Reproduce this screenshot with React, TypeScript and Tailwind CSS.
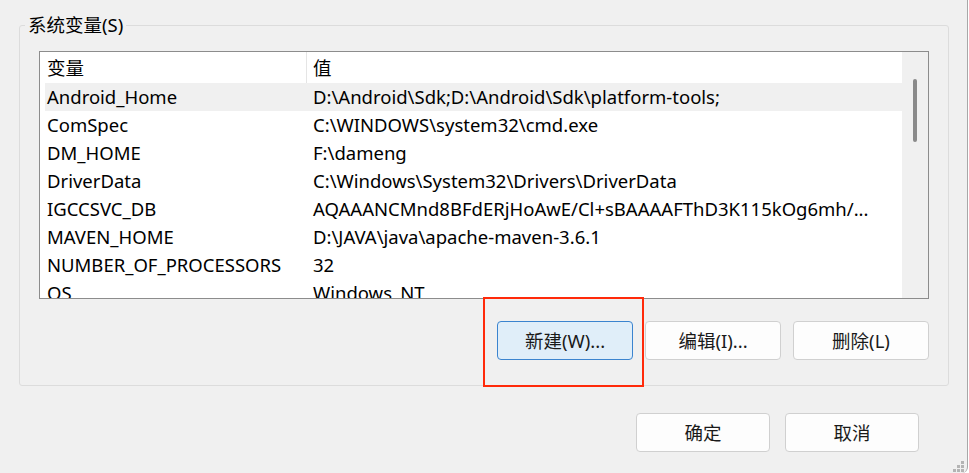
const rows: [string, string][] = [
  ["Android_Home", "D:\\Android\\Sdk;D:\\Android\\Sdk\\platform-tools;"],
  ["ComSpec", "C:\\WINDOWS\\system32\\cmd.exe"],
  ["DM_HOME", "F:\\dameng"],
  ["DriverData", "C:\\Windows\\System32\\Drivers\\DriverData"],
  ["IGCCSVC_DB", "AQAAANCMnd8BFdERjHoAwE/Cl+sBAAAAFThD3K115kOg6mh/..."],
  ["MAVEN_HOME", "D:\\JAVA\\java\\apache-maven-3.6.1"],
  ["NUMBER_OF_PROCESSORS", "32"],
  ["OS", "Windows_NT"],
];

function Btn({ label, primary, w = "w-[136px]" }: { label: string; primary?: boolean; w?: string }) {
  return (
    <button
      className={`flex h-[39px] ${w} items-center justify-center rounded-[4px] border text-[18.5px] text-[#1a1a1a] ${
        primary ? "border-[#3b84cf] bg-[#e0eef9]" : "border-[#d0d0d0] bg-[#fdfdfd]"
      }`}
    >
      {label}
    </button>
  );
}

export default function App() {
  return (
    <div
      className="relative h-[473px] w-[968px] overflow-hidden rounded-br-[6px] border-r border-[#a8a8a8] bg-[#f0f0f0] text-[18.5px] text-black"
      style={{ fontFamily: '"Noto Sans", "Noto Sans CJK SC", sans-serif' }}
    >
      <fieldset className="ml-[19px] mt-[13px] h-[373px] w-[930px] rounded-[3px] border border-[#dcdcdc] px-[19px]">
        <legend className="-ml-[14px] px-[3px] leading-[24px]">系统变量(S)</legend>

        {/* list view */}
        <div className="mt-[14px] flex h-[248px] w-[890px] overflow-hidden border border-[#8c8c8c] bg-white">
          <div className="flex-1 overflow-hidden pl-[5px]">
            <div className="flex h-[31px] items-center">
              <div className="w-[261px] pl-[2px]">变量</div>
              <div className="h-full w-px bg-[#e5e5e5]" />
              <div className="pl-[6px]">值</div>
            </div>
            {rows.map(([k, v], i) => (
              <div
                key={k}
                className={`flex h-[28px] items-center whitespace-nowrap ${i === 0 ? "bg-[#f0f0f0]" : ""}`}
              >
                <div className="w-[262px] pl-[2px]">{k}</div>
                <div className="pl-[6px]">{v}</div>
              </div>
            ))}
          </div>
          <div className="w-[26px] bg-[#f0f0f0] pt-[27px]">
            <div className="ml-[11px] h-[63px] w-[4px] rounded-full bg-[#8a8a8a]" />
          </div>
        </div>

        {/* action buttons */}
        <div className="mt-[22px] flex justify-end gap-[12px]">
          <div className="relative">
            <Btn label="新建(W)..." primary />
            <div className="pointer-events-none absolute -left-[14px] -top-[24px] h-[90px] w-[161px] border-2 border-[#ff2a0a]" />
          </div>
          <Btn label="编辑(I)..." />
          <Btn label="删除(L)" />
        </div>
      </fieldset>

      <div className="mr-[48px] mt-[27px] flex justify-end gap-[15px]">
        <Btn label="确定" w="w-[134px]" />
        <Btn label="取消" w="w-[134px]" />
      </div>

      {/* resize grip */}
      <svg className="absolute bottom-0 right-[2px]" width="13" height="13" viewBox="0 0 13 13">
        <g fill="#b4b4b4">
          <rect x="9" y="1" width="3" height="3" />
          <rect x="5" y="5" width="3" height="3" />
          <rect x="9" y="5" width="3" height="3" />
          <rect x="1" y="9" width="3" height="3" />
          <rect x="5" y="9" width="3" height="3" />
          <rect x="9" y="9" width="3" height="3" />
        </g>
      </svg>
    </div>
  );
}
